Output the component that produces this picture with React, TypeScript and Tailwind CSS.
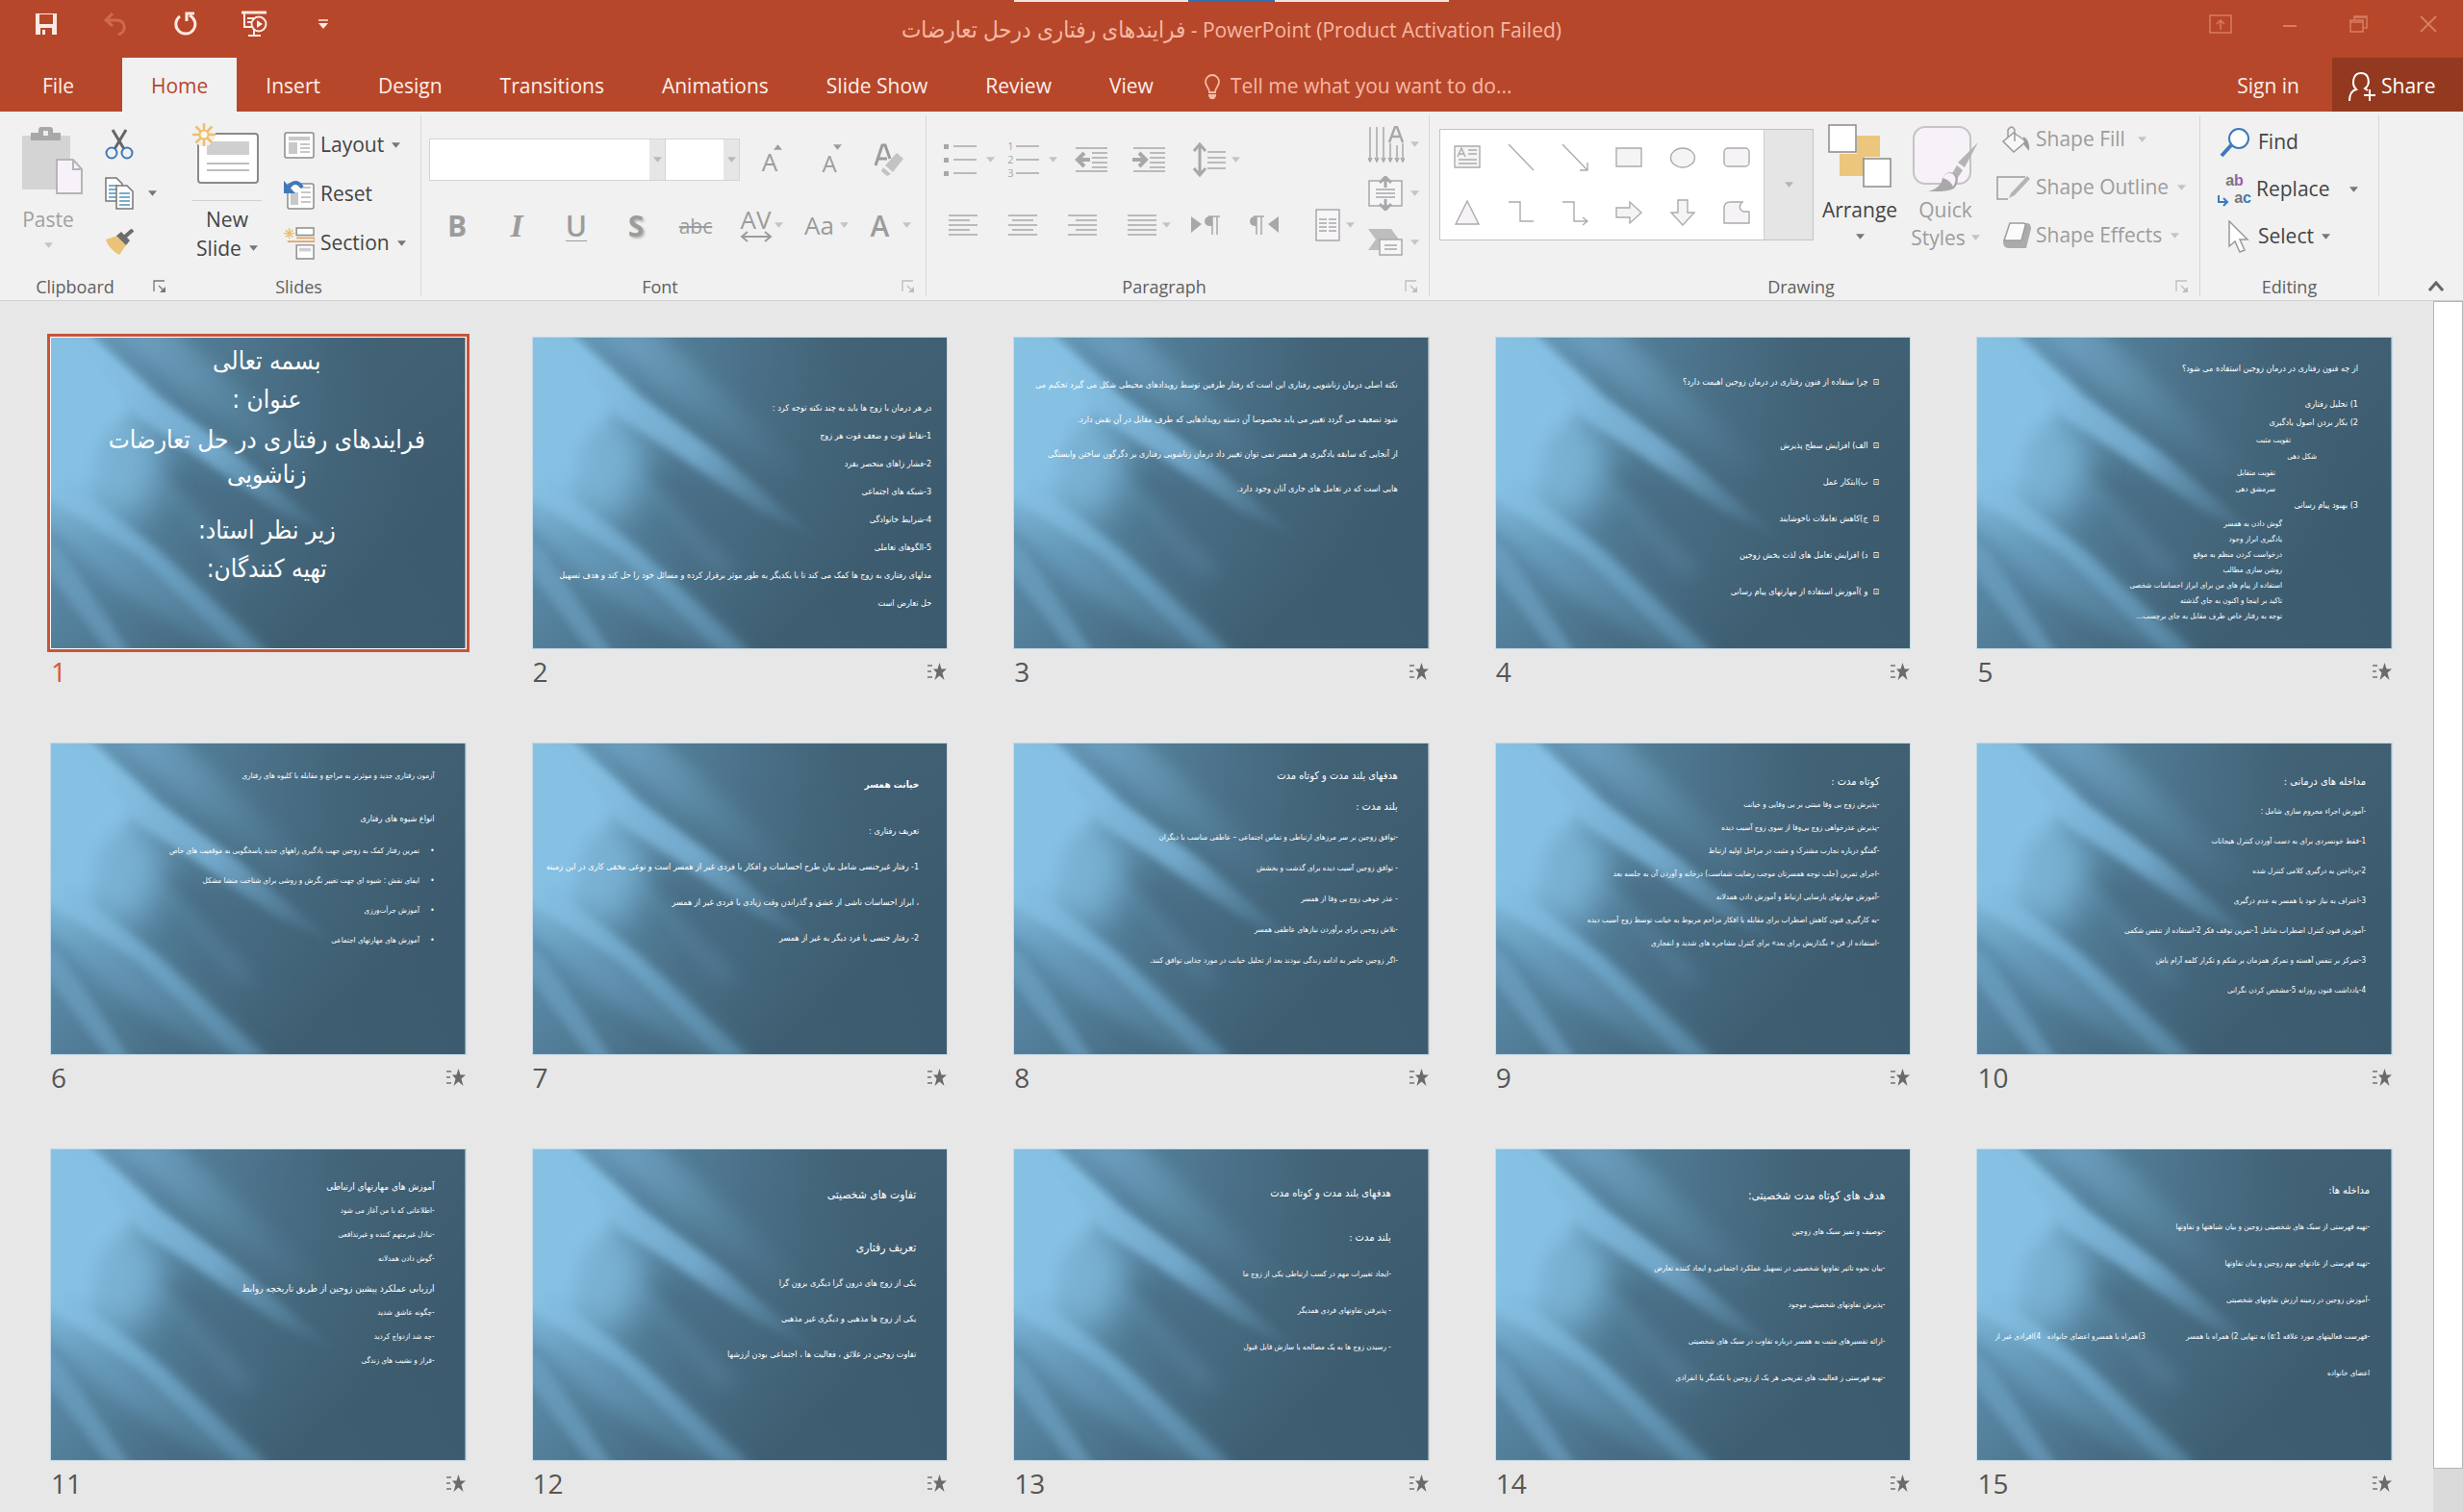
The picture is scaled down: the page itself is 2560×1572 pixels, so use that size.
import type { ReactNode } from "react"
import clsx from "clsx"

type Line = [text: string, className?: string]

type SlideData = {
  body: string
  lines: Line[]
}

const slides: SlideData[] = [
  {
    body: "pt-[4px] pl-[18px] text-center text-[26px] leading-[40px]",
    lines: [
      ["بسمه تعالی"],
      ["عنوان :"],
      ["فرایندهای رفتاری در حل تعارضات", "mt-1 leading-[36px]"],
      ["زناشویی", "leading-[36px]"],
      ["زیر نظر استاد:", "mt-5"],
      ["تهیه کنندگان:"],
    ],
  },
  {
    body: "pt-[59px] pr-[16px] text-[9px] leading-[29px]",
    lines: [
      ["در هر درمان با زوج ها باید به چند نکته توجه کرد :"],
      ["1-نقاط قوت و ضعف قوت هر زوج"],
      ["2-فشار زاهای منحصر بفرد"],
      ["3-شبکه های اجتماعی"],
      ["4-شرایط خانوادگی"],
      ["5-الگوهای تعاملی"],
      ["مدلهای رفتاری به زوج ها کمک می کند تا با یکدیگر به طور موثر برقرار کرده و مسائل خود را حل کند و هدف تسهیل"],
      ["حل تعارض است"],
    ],
  },
  {
    body: "pt-[31px] pr-[32px] text-[9px] leading-[36px]",
    lines: [
      ["نکته اصلی درمان زناشویی رفتاری این است که رفتار طرفین توسط رویدادهای محیطی شکل می گیرد تحکیم می"],
      ["شود تضعیف می گردد تغییر می یابد مخصوصا آن دسته رویدادهایی که طرف مقابل در آن نقش دارد."],
      ["از آنجایی که سابقه یادگیری هر همسر نمی توان تغییر داد درمان زناشویی رفتاری بر دگرگون ساختن وابستگی"],
      ["هایی است که در تعامل های جاری آنان وجود دارد."],
    ],
  },
  {
    body: "pt-[27px] pr-[32px] text-[9px] leading-[38px]",
    lines: [
      ["⊡  چرا ستفاده از فنون رفتاری در درمان زوجین اهیمت دارد؟"],
      ["⊡  الف) افزایش سطح پذیرش", "mt-7"],
      ["⊡  ب)ابتکار عمل"],
      ["⊡  ج)کاهش تعاملات ناخوشایند"],
      ["⊡  د) افزایش تعامل های لذت بخش زوجین"],
      ["⊡  و )آموزش استفاده از مهارتهای پیام رسانی"],
    ],
  },
  {
    body: "pt-[24px] pr-[35px] text-[9px] leading-[16px]",
    lines: [
      ["از چه فنون رفتاری در درمان زوجین استفاده می شود؟"],
      ["1) تحلیل رفتاری", "mt-5 leading-[19px]"],
      ["2) بکار بردن اصول یادگیری", "leading-[19px]"],
      ["تقویت مثبت", "pr-[70px] text-[8px] leading-[17px]"],
      ["شکل دهی", "pr-[43px] text-[8px] leading-[17px]"],
      ["تقویت متقابل", "pr-[86px] text-[8px] leading-[17px]"],
      ["سرمشق دهی", "pr-[86px] text-[8px] leading-[17px]"],
      ["3) بهبود پیام رسانی"],
      ["گوش دادن به همسر", "mt-1 pr-[79px] text-[8px]"],
      ["یادگیری ابراز وجود", "pr-[79px] text-[8px]"],
      ["درخواست کردن منظم به موقع", "pr-[79px] text-[8px]"],
      ["روشن سازی مطالب", "pr-[79px] text-[8px]"],
      ["استفاده از پیام های من برای ابراز احساسات شخصی", "pr-[79px] text-[8px]"],
      ["تاکید بر اینجا و اکنون به جای گذشته", "pr-[79px] text-[8px]"],
      ["توجه به رفتار خاص طرف مقابل به جای برچسب...", "pr-[79px] text-[8px]"],
    ],
  },
  {
    body: "pt-[18px] pr-[32px] text-[8px] leading-[31px]",
    lines: [
      ["آزمون رفتاری جدید و موثرتر به مراجع و مقابله با کلیوه های رفتاری"],
      ["انواع شیوه های رفتاری", "mt-[14px] text-[9px]"],
      ["•     تمرین رفتار کمک به زوجین جهت یادگیری راههای جدید پاسخگویی به موقعیت های خاص", "mt-[2px]"],
      ["•     ایفای نقش : شیوه ای جهت تغییر نگرش و روشی برای شناخت منشا مشکل"],
      ["•     آموزش جرأت‌ورزی"],
      ["•     آموزش های مهارتهای اجتماعی"],
    ],
  },
  {
    body: "pt-[24px] pr-[29px] text-[9px] leading-[37px]",
    lines: [
      ["خیانت همسر", "font-bold text-[10px]"],
      ["تعریف رفتاری :", "mt-3"],
      ["1- رفتار غیرجنسی شامل بیان طرح احساسات و افکار با فردی غیر از همسر است و نوعی مخفی کاری در این زمینه"],
      ["، ابراز احساسات ناشی از عشق و گذراندن وقت زیادی با فردی غیر از همسر"],
      ["2- رفتار جنسی با فرد دیگر به غیر از همسر"],
    ],
  },
  {
    body: "pt-[18px] pr-[32px] text-[8px] leading-[32px]",
    lines: [
      ["هدفهای بلند مدت و کوتاه مدت", "text-[11px]"],
      ["بلند مدت :", "text-[11px]"],
      ["-توافق زوجین بر سر مرزهای ارتباطی و تماس اجتماعی – عاطفی مناسب با دیگران"],
      ["- توافق زوجین آسیب دیده برای گذشت و بخشش"],
      ["- عذر خوهی زوج بی وفا از همسر"],
      ["-تلاش زوجین برای برآوردن نیازهای عاطفی همسر"],
      ["-اگر زوجین حاضر به ادامه زندگی نبودند بعد از تحلیل خیانت در مورد جدایی توافق کنند."],
    ],
  },
  {
    body: "pt-[28px] pr-[32px] text-[8px] leading-[24px]",
    lines: [
      ["کوتاه مدت :", "text-[11px]"],
      ["-پذیرش زوج بی وفا مبتنی بر بی وفایی و خیانت"],
      ["-پذیرش عذرخواهی زوج بی‌وفا از سوی زوج آسیب دیده"],
      ["-گفتگو درباره تجارب مشترک و مثبت در مراحل اولیه ارتباط"],
      ["-اجرای تمرین (جلب توجه همسرتان موجب رضایت شماست) درخانه و آوردن آن به جلسه بعد"],
      ["-آموزش مهارتهای بازسایی ارتباط و آموزش دادن همدلانه"],
      ["-به کارگیری فنون کاهش اضطراب برای مقابله با افکار مزاحم مربوط به خیانت توسط زوج آسیب دیده"],
      ["-استفاده از فن « بگذاریش برای بعد» برای کنترل مشاجره های شدید و انفجاری"],
    ],
  },
  {
    body: "pt-[24px] pr-[27px] text-[8px] leading-[31px]",
    lines: [
      ["مداخله های درمانی :", "text-[11px]"],
      ["-آموزش اجراء محروم سازی شامل :"],
      ["1-فقط خونسردی برای به دست آوردن کنترل هیجانات"],
      ["2-پرداختن به درگیری کلامی کنترل شده"],
      ["3-اعتراف به نیاز خود یا همسر به عدم درگیری"],
      ["-آموزش فنون کنترل اضطراب شامل 1-تمرین توقف فکر 2-استفاده از تنفس شکمی"],
      ["3-تمرکز بر تنفس آهسته و تمرکز همزمان بر شکم و تکرار کلمه آرام باش"],
      ["4-یادداشت فنون روزانه 5-مشخص کردن نگرانی"],
    ],
  },
  {
    body: "pt-[26px] pr-[32px] text-[8px] leading-[25px]",
    lines: [
      ["آموزش های مهارتهای ارتباطی", "text-[10px]"],
      ["-اطلاعاتی که با من آغاز می شود"],
      ["-تبادل غیرمتهم کننده و غیرتدافعی"],
      ["-گوش دادن همدلانه"],
      ["ارزیابی عملکرد پیشین زوجین از طریق تاریخچه روابط", "mt-[6px] text-[10px]"],
      ["-چگونه عاشق شدید"],
      ["-چه شد ازدواج کردید"],
      ["-فراز و نشیب های زندگی"],
    ],
  },
  {
    body: "pt-[29px] pr-[32px] text-[9px] leading-[37px]",
    lines: [
      ["تفاوت های شخصیتی", "text-[12px]"],
      ["تعریف رفتاری", "mt-[18px] text-[12px]"],
      ["یکی از زوج های درون گرا دیگری برون گرا"],
      ["یکی از زوج ها مذهبی و دیگری غیر مذهبی"],
      ["تفاوت زوجین در علائق ، فعالیت ها ، اجتماعی بودن ارزشها"],
    ],
  },
  {
    body: "pt-[27px] pr-[39px] text-[8px] leading-[38px]",
    lines: [
      ["هدفهای بلند مدت و کوتاه مدت", "text-[11px]"],
      ["بلند مدت :", "mt-2 text-[11px]"],
      ["-ایجاد تغییرات مهم در کسب ارتباطی یکی از زوج ما"],
      ["- پذیرفتن تفاوتهای فردی همدیگر"],
      ["- رسیدن زوج ها به یک مصالحه یا سازش قابل قبول"],
    ],
  },
  {
    body: "pt-[29px] pr-[26px] text-[8px] leading-[38px]",
    lines: [
      ["هدف های کوتاه مدت شخصیتی:", "text-[12px]"],
      ["-توصیف و تمیز سبک های زوجین"],
      ["-بیان نحوه تاثیر تفاوتها شخصیتی در تسهیل عملکرد اجتماعی و ایجاد کننده تعارض"],
      ["-پذیرش تفاوتهای شخصیتی موجود"],
      ["-ارائه تفسیرهای مثبت به همسر درباره تفاوت در سبک های شخصیتی"],
      ["-تهیه فهرستی ز فعالیت های تفریحی هر یک از زوجین با یکدیگر یا انفرادی"],
    ],
  },
  {
    body: "pt-[24px] pr-[23px] pl-[18px] text-[8px] leading-[38px]",
    lines: [
      ["مداخله ها:", "text-[11px]"],
      ["-تهیه فهرستی از سبک های شخصیتی زوجین و بیان شباهتها و تفاوتها"],
      ["-تهیه فهرستی از عادتهای مهم زوجین و بیان تفاوتها"],
      ["-آموزش زوجین در زمینه ارزش تفاوتهای شخصیتی"],
      ["-فهرست فعالیتهای مورد علاقه ۵:1) به تنهایی 2) همراه با همسر\t3)همراه با همسرو اعضای خانواده   4)افرادی غیر از", "flex justify-between"],
      ["اعضای خانواده"],
    ],
  },
]

/* Shared artwork behind each slide */

function SlideArt() {
  return (
    <svg width="0" height="0" className="absolute" aria-hidden="true">
      <defs>
        <linearGradient id="base" gradientUnits="userSpaceOnUse" x1="20" y1="200" x2="350" y2="60">
          <stop offset="0" stopColor="#6195b5" />
          <stop offset="0.45" stopColor="#54809b" />
          <stop offset="0.8" stopColor="#4a7087" />
          <stop offset="1" stopColor="#446579" />
        </linearGradient>
        <linearGradient id="shade" gradientUnits="userSpaceOnUse" x1="150" y1="40" x2="330" y2="250">
          <stop offset="0" stopColor="#3c5a6d" stopOpacity="0" />
          <stop offset="1" stopColor="#3c5a6d" stopOpacity="0.9" />
        </linearGradient>
        <linearGradient id="ray" gradientUnits="userSpaceOnUse" x1="40" y1="20" x2="300" y2="215">
          <stop offset="0" stopColor="#86c1e4" />
          <stop offset="0.5" stopColor="#78b0d4" stopOpacity="0.85" />
          <stop offset="1" stopColor="#5b8dab" stopOpacity="0" />
        </linearGradient>
        <linearGradient id="rayFaint" gradientUnits="userSpaceOnUse" x1="100" y1="0" x2="290" y2="150">
          <stop offset="0" stopColor="#7db4d6" stopOpacity="0.55" />
          <stop offset="1" stopColor="#5b8dab" stopOpacity="0" />
        </linearGradient>
        <linearGradient id="rayLow" gradientUnits="userSpaceOnUse" x1="0" y1="150" x2="230" y2="330">
          <stop offset="0" stopColor="#86c1e4" />
          <stop offset="0.5" stopColor="#70a8cb" stopOpacity="0.75" />
          <stop offset="1" stopColor="#5f93b2" stopOpacity="0.5" />
        </linearGradient>
        <filter id="soft" x="-20%" y="-20%" width="140%" height="140%">
          <feGaussianBlur stdDeviation="4" />
        </filter>
        <filter id="medium" x="-30%" y="-30%" width="160%" height="160%">
          <feGaussianBlur stdDeviation="9" />
        </filter>
        <filter id="wide" x="-40%" y="-40%" width="180%" height="180%">
          <feGaussianBlur stdDeviation="18" />
        </filter>
      </defs>
      <symbol id="slide-art" viewBox="0 0 431 323" preserveAspectRatio="none">
        <rect width="431" height="323" fill="url(#base)" />
        <rect width="431" height="323" fill="url(#shade)" />
        <path d="M50 -10 L125 -10 L290 140 L250 140 Z" fill="url(#rayFaint)" filter="url(#medium)" />
        <path d="M-40 -40 L10 -40 L90 70 L120 130 L90 190 L-40 170 Z" fill="#7fb9dc" opacity="0.85" filter="url(#wide)" />
        <path d="M-20 -20 L26 -12 L100 60 L50 110 L40 165 L-20 150 Z" fill="#86c1e4" filter="url(#medium)" />
        <path d="M110 130 L165 150 L260 205 L250 235 L170 215 Z" fill="#44677d" opacity="0.45" filter="url(#medium)" />
        <path d="M20 -12 L32 -8 L108 58 L195 122 L300 212 L235 180 L150 122 L90 84 Z" fill="url(#ray)" filter="url(#soft)" />
        <path d="M60 95 L85 108 L215 245 L190 245 Z" fill="#7db4d6" opacity="0.2" filter="url(#medium)" />
        <path d="M-10 125 L30 160 L112 225 L232 330 L180 330 L70 262 L-10 190 Z" fill="url(#rayLow)" opacity="0.55" filter="url(#medium)" />
        <path d="M-10 128 L32 158 L112 222 L228 330 L198 330 L92 228 L-10 160 Z" fill="url(#rayLow)" filter="url(#soft)" />
        <path d="M-10 205 L12 222 L84 330 L62 330 L-10 235 Z" fill="#74abcd" opacity="0.5" filter="url(#soft)" />
      </symbol>
    </svg>
  )
}

function Caret({ className }: { className?: string }) {
  return (
    <svg viewBox="0 0 10 6" className={clsx("h-[6px] w-[9px] shrink-0", className)} fill="currentColor">
      <path d="M0 0h10L5 6z" />
    </svg>
  )
}

function Icon({ box, className, children }: { box: string; className: string; children: ReactNode }) {
  return (
    <svg viewBox={box} className={clsx("shrink-0", className)} fill="none" stroke="currentColor" strokeWidth="2" aria-hidden="true">
      {children}
    </svg>
  )
}

function Tool({ label, className, children }: { label: string; className?: string; children: ReactNode }) {
  return (
    <button aria-label={label} title={label} className={clsx("flex items-center justify-center gap-[6px]", className)}>
      {children}
    </button>
  )
}

function Group({ label, className, launcher, muted, line = true, children }: {
  label: string
  className: string
  launcher?: boolean
  muted?: boolean
  line?: boolean
  children: ReactNode
}) {
  return (
    <section aria-label={label} className={clsx("flex shrink-0 flex-col", className)}>
      <div className="flex flex-1">
        <div className="flex min-w-0 flex-1 flex-col">
          <div className="flex h-[168px]">{children}</div>
          <div className={clsx("relative flex h-[28px] items-center justify-center text-[18px] text-[#606060]", launcher && "pr-[28px]")}>
            {label}
            {launcher && (
              <button aria-label={label + " settings"} className={clsx("absolute right-[11px]", muted ? "text-[#bdbdbd]" : "text-[#777]")}>
                <Icon box="0 0 14 14" className="size-[14px]">
                  <path d="M1 12V1h11" strokeWidth="1.3" />
                  <path d="M6 6l5 5" strokeWidth="1.3" />
                  <path d="M13 7v6H7z" fill="currentColor" stroke="none" />
                </Icon>
              </button>
            )}
          </div>
        </div>
        {line && <div className="my-1 w-px bg-[#d6d6d6]" />}
      </div>
    </section>
  )
}

/* Title bar */

function TitleBar() {
  return (
    <div className="relative flex h-[60px] items-start justify-between">
      <div className="flex pl-3 text-[#fbe9e3]">
        <Tool label="Save" className="h-[50px] w-[72px]">
          <Icon box="0 0 24 24" className="size-6">
            <path d="M1 1h22v22H1z" fill="currentColor" stroke="none" />
            <path d="M5 2h14v10H5z M6 16h12v7H6z" fill="#b7472a" stroke="none" />
            <path d="M8 18h3v5H8z" fill="currentColor" stroke="none" />
          </Icon>
        </Tool>
        <Tool label="Undo" className="h-[50px] w-[72px] text-[#d06a4f]">
          <Icon box="0 0 24 24" className="size-6">
            <path d="M9 1L2 8l7 6M3 8h10c10 0 11 12 2 15" strokeWidth="3" />
          </Icon>
        </Tool>
        <Tool label="Repeat" className="h-[50px] w-[72px]">
          <Icon box="0 0 26 26" className="size-[26px]">
            <path d="M8 5a10 10 0 1 0 10-1" strokeWidth="3" />
            <path d="M15 10V2h8" strokeWidth="3" />
          </Icon>
        </Tool>
        <Tool label="Start From Beginning" className="h-[50px] w-[72px]">
          <Icon box="0 0 28 28" className="size-7">
            <path d="M1 2h26" strokeWidth="3" />
            <path d="M4 3v14h8M7 8h7M7 12h5M14 20v5M8 26h13" />
            <circle cx="19" cy="14" r="7.500" />
            <path d="M17 10l6 4-6 4z" fill="currentColor" stroke="none" />
          </Icon>
        </Tool>
        <Tool label="Customize Quick Access Toolbar" className="h-[50px] w-[72px]">
          <Icon box="0 0 10 10" className="size-[10px]">
            <path d="M0 1h10" strokeWidth="1.500" />
            <path d="M0 4h10L5 10z" fill="currentColor" stroke="none" />
          </Icon>
        </Tool>
      </div>

      <h1 className="absolute inset-x-0 top-[14px] mx-auto w-fit text-[21px] leading-[32px] text-[#f5b9a5]">
        <bdi className="text-[24px]">فرایندهای رفتاری درحل تعارضات</bdi> - PowerPoint (Product Activation Failed)
      </h1>
      <div className="absolute inset-x-0 top-0 mx-auto flex h-[2px] w-[452px] justify-center bg-[#f4e4df]">
        <div className="w-[90px] bg-[#2f6db5]" />
      </div>

      <div className="flex text-[#d67d64]">
        <Tool label="Ribbon Display Options" className="h-[50px] w-[72px]">
          <Icon box="0 0 24 20" className="h-5 w-6">
            <path d="M1 1h22v18H1zM12 16V6M8 10l4-4 4 4" strokeWidth="1.500" />
          </Icon>
        </Tool>
        <Tool label="Minimize" className="h-[50px] w-[72px]">
          <Icon box="0 0 14 6" className="h-[6px] w-[14px]">
            <path d="M0 5h14" />
          </Icon>
        </Tool>
        <Tool label="Restore Down" className="h-[50px] w-[72px]">
          <Icon box="0 0 20 20" className="size-5">
            <path d="M1 6h13v12H1zM1 8h13M5 5V2h13v12h-4M5 3h13" strokeWidth="1.500" />
          </Icon>
        </Tool>
        <Tool label="Close" className="h-[50px] w-[72px]">
          <Icon box="0 0 18 18" className="size-[18px]">
            <path d="M1 1l16 16M17 1L1 17" />
          </Icon>
        </Tool>
      </div>
    </div>
  )
}

const tabs = ["Home", "Insert", "Design", "Transitions", "Animations", "Slide Show", "Review", "View"]

function Tabs() {
  return (
    <nav className="flex h-[56px] items-stretch text-[21px] text-[#fdeee9]">
      <button className="mr-[6px] w-[121px] pt-[3px]">File</button>
      {tabs.map((tab) => (
        <button key={tab} className={clsx("px-[30px] pt-[3px] whitespace-nowrap", tab === "Home" && "bg-[#f1f1f1] text-[#b7472a]")}>
          {tab}
        </button>
      ))}
      <label className="ml-[22px] flex flex-1 items-center gap-[10px] pt-[3px] text-[#f5b9a5]">
        <Icon box="0 0 18 28" className="h-7 w-[18px]">
          <path d="M6 20c0-5-4-6-4-11a7 7 0 0 1 14 0c0 5-4 6-4 11z" strokeWidth="1.800" />
          <path d="M5 22h8v2l-2 3H7l-2-3z" fill="currentColor" stroke="none" />
        </Icon>
        <input aria-label="Tell me" placeholder="Tell me what you want to do..." className="w-[420px] bg-transparent outline-none placeholder:text-[#f5b9a5]" />
      </label>
      <button className="mr-[34px] pt-[3px]">Sign in</button>
      <button className="flex w-[136px] items-center gap-[6px] bg-[#93391f] pt-[3px] pl-[17px] text-white">
        <Icon box="0 0 28 32" className="h-8 w-7">
          <path d="M1 31c0-7 3-11 7-12-5-5-4-17 5-17s10 12 4 16l3 2M16 25h12M22 19v12" />
        </Icon>
        Share
      </button>
    </nav>
  )
}

/* Ribbon groups */

function Clipboard() {
  return (
    <Group label="Clipboard" className="w-[184px]" launcher line={false}>
      <button className="ml-[6px] flex w-[88px] flex-col items-center pt-4 text-[#a0a0a0]">
        <Icon box="0 0 72 70" className="h-[70px] w-[72px]">
          <path d="M9 9h50v56H9z" fill="#d4d4d4" stroke="none" />
          <path d="M18 6h8V3q0-3 3-3h9q3 0 3 3v3h8v8H18z" fill="#a8a8a8" stroke="none" />
          <path d="M31 4h5v5h-5z" fill="#eee" stroke="none" />
          <path d="M45 34h17l9 10v25H45z" fill="#f7f2f9" stroke="#b5b5b5" />
          <path d="M62 34v10h9" stroke="#b5b5b5" />
        </Icon>
        <span className="mt-3 leading-[28px]">Paste</span>
        <Caret className="mt-[10px] text-[#c4c4c4]" />
      </button>
      <div className="flex flex-col pt-2 pl-[14px]">
        <Tool label="Cut" className="h-[51px] w-[32px]">
          <Icon box="0 0 30 32" className="h-8 w-[30px]">
            <path d="M8 1l12 20M22 1L10 21" stroke="#666" strokeWidth="3" />
            <circle cx="7" cy="25" r="5.500" stroke="#3d7ab8" />
            <circle cx="23" cy="25" r="5.500" stroke="#3d7ab8" />
          </Icon>
        </Tool>
        <div className="flex">
          <Tool label="Copy" className="h-[51px] w-[32px]">
            <Icon box="0 0 30 34" className="h-[34px] w-[30px]">
              <path d="M1 1h11l6 6v18H1z" fill="#fff" stroke="#777" strokeWidth="1.500" />
              <path d="M4 9h9M4 13h9M4 17h9M4 21h9" stroke="#4f93b8" strokeWidth="1.500" />
              <path d="M12 9h11l6 6v18H12z" fill="#fff" stroke="#777" strokeWidth="1.500" />
              <path d="M15 17h11M15 21h11M15 25h11M15 29h11" stroke="#4f93b8" strokeWidth="1.500" />
            </Icon>
          </Tool>
          <Tool label="Copy options" className="w-[36px] text-[#777]">
            <Caret />
          </Tool>
        </div>
        <Tool label="Format Painter" className="h-[51px] w-[32px]">
          <Icon box="0 0 32 28" className="h-7 w-8">
            <path d="M2 11l12-4 9 10-7 10C9 23 4 18 2 11z" fill="#e9c478" stroke="none" />
            <path d="M13 7l5-4 9 9-4 5z" fill="#6d6d6d" stroke="none" />
            <path d="M22 8l8-7" stroke="#6d6d6d" strokeWidth="4" />
          </Icon>
        </Tool>
      </div>
    </Group>
  )
}

function Spark() {
  return <path d="M12 0v24M0 12h24M3.500 3.500l17 17M20.500 3.500l-17 17" stroke="#eebf6e" strokeWidth="2.500" />
}

function Slides() {
  return (
    <Group label="Slides" className="w-[254px]">
      <button className="ml-4 flex w-[72px] flex-col items-center pt-3 text-[#444]">
        <Icon box="0 0 72 64" className="h-16 w-[72px]">
          <rect x="6" y="11" width="62" height="51" rx="3" fill="#fff" stroke="#8a8a8a" />
          <path d="M15 19h44v14H15z" fill="#cfcfcf" stroke="none" />
          <path d="M15 42h44M15 49h44" stroke="#a9a9a9" strokeWidth="1.500" />
          <circle cx="12" cy="12" r="12" fill="#f1f1f1" stroke="none" />
          <Spark />
          <circle cx="12" cy="12" r="4.500" fill="#fff8e8" stroke="#eebf6e" />
        </Icon>
        <span className="mt-4 h-px w-full bg-[#d0d0d0]" />
        <span className="mt-1 leading-[30px]">New</span>
        <span className="flex items-center gap-2 leading-[30px]">Slide <Caret className="text-[#777]" /></span>
      </button>
      <div className="ml-[23px] flex flex-col pt-[9px] text-[#444]">
        <button className="flex h-[51px] items-center gap-[6px]">
          <Icon box="0 0 32 28" className="h-7 w-8">
            <rect x="1" y="1" width="30" height="26" rx="2" fill="#fff" stroke="#8a8a8a" strokeWidth="1.500" />
            <path d="M5 5h22v4H5zM5 11h9v12H5z" fill="#c9c9c9" stroke="none" />
            <path d="M17 13h10M17 17h10M17 21h10" stroke="#b5b5b5" strokeWidth="1.500" />
          </Icon>
          Layout <Caret className="ml-[2px] text-[#777]" />
        </button>
        <button className="flex h-[51px] items-center gap-[6px]">
          <Icon box="0 0 32 32" className="size-8">
            <rect x="4" y="5" width="27" height="26" rx="2" fill="#fff" stroke="#8a8a8a" strokeWidth="1.500" />
            <path d="M7 14h8v13H7z" fill="#c9c9c9" stroke="none" />
            <path d="M18 9h10M18 14h10M18 19h10M18 24h10" stroke="#b5b5b5" strokeWidth="1.500" />
            <path d="M19 9C14 1 7 3 4 12" stroke="#3d7ab8" strokeWidth="4" />
            <path d="M0 2v13h12z" fill="#3d7ab8" stroke="none" />
          </Icon>
          Reset
        </button>
        <button className="flex h-[51px] items-center gap-[6px]">
          <Icon box="0 0 34 36" className="h-9 w-8">
            <path d="M14 1h19v8H14zM14 20h19v15H14z" fill="#fff" stroke="#8a8a8a" strokeWidth="1.500" />
            <path d="M17 23h13v4H17z" fill="#cfcfcf" stroke="none" />
            <path d="M4 16h30v-4H14" stroke="#e0a56a" />
            <path d="M6 1v12M0 7h12M2 3l8 8M10 3l-8 8" stroke="#eebf6e" strokeWidth="1.500" />
          </Icon>
          Section <Caret className="ml-[2px] text-[#777]" />
        </button>
      </div>
    </Group>
  )
}

function FontGroup() {
  return (
    <Group label="Font" className="w-[525px] text-[#9c9c9c]" launcher muted>
      <div className="flex flex-col pt-7">
        <div className="flex h-[44px] pl-2">
          <input aria-label="Font" className="w-[229px] border border-r-0 border-[#d4d4d4] bg-white px-2 text-[20px] outline-none" />
          <Tool label="Font list" className="w-[17px] border border-l-0 border-[#d4d4d4] bg-[#e6e6e6] text-[#b9b9b9]">
            <Caret className="w-2" />
          </Tool>
          <input aria-label="Font size" className="w-[60px] border-y border-[#d4d4d4] bg-white px-2 text-[20px] outline-none" />
          <Tool label="Size list" className="w-[17px] border border-l-0 border-[#d4d4d4] bg-[#e6e6e6] text-[#b9b9b9]">
            <Caret className="w-2" />
          </Tool>
          <Tool label="Increase Font Size" className="relative w-[62px] pt-1 text-[26px]">
            A
            <Caret className="absolute top-[6px] right-[18px] rotate-180" />
          </Tool>
          <Tool label="Decrease Font Size" className="relative w-[62px] pt-2 text-[24px]">
            A
            <Caret className="absolute top-[6px] right-[18px]" />
          </Tool>
          <Tool label="Clear Formatting" className="w-[62px]">
            <Icon box="0 0 32 36" className="h-9 w-8">
              <path d="M2 24L9 3h3l5 14M5 17h9" strokeWidth="3" />
              <path d="M24 11l7 6-11 14-8-7z" fill="#c3c3c3" stroke="none" />
              <path d="M10 26l8 7-4 2-6-5z" fill="#c3c3c3" stroke="none" />
            </Icon>
          </Tool>
        </div>
        <div className="mt-6 flex h-[44px] pl-[6px] text-[30px]">
          <Tool label="Bold" className="w-[62px] font-bold">B</Tool>
          <Tool label="Italic" className="w-[62px] font-['Liberation_Serif',serif] text-[34px] font-bold italic">I</Tool>
          <Tool label="Underline" className="w-[62px] font-semibold underline decoration-1 underline-offset-4">U</Tool>
          <Tool label="Text Shadow" className="w-[62px] font-bold text-shadow-[2px_2px_2px_#bbb]">S</Tool>
          <Tool label="Strikethrough" className="w-[62px] pt-1 text-[21px] line-through">abc</Tool>
          <Tool label="Character Spacing" className="w-[74px]">
            <span className="flex flex-col items-center text-[26px] leading-[24px]">
              AV
              <Icon box="0 0 34 12" className="h-3 w-[34px]">
                <path d="M2 6h30M8 1L2 6l6 5M26 1l6 5-6 5" />
              </Icon>
            </span>
            <Caret className="-ml-1 text-[#c4c4c4]" />
          </Tool>
          <Tool label="Change Case" className="w-[62px] text-[26px]">
            Aa <Caret className="text-[#c4c4c4]" />
          </Tool>
          <Tool label="Font Color" className="w-[72px] font-semibold">
            A <Caret className="ml-2 text-[#c4c4c4]" />
          </Tool>
        </div>
      </div>
    </Group>
  )
}

const aligns: [string, string][] = [
  ["Align Left", "M0 1h30M0 6h22M0 11h30M0 16h22M0 21h30"],
  ["Center", "M0 1h30M4 6h22M0 11h30M4 16h22M0 21h30"],
  ["Align Right", "M0 1h30M8 6h22M0 11h30M8 16h22M0 21h30"],
]

function Paragraph() {
  return (
    <Group label="Paragraph" className="w-[523px] text-[#a8a8a8]" launcher muted>
      <div className="flex w-[459px] flex-col pt-7">
        <div className="flex h-[44px] pl-[11px]">
          <Tool label="Bullets" className="w-[66px]">
            <Icon box="0 0 34 36" className="h-9 w-[34px]">
              <path d="M10 4h24M10 18h24M10 32h24" strokeWidth="1.500" />
              <path d="M0 2h5v5H0zM0 16h5v5H0zM0 30h5v5H0z" fill="currentColor" stroke="none" />
            </Icon>
            <Caret className="ml-1 text-[#c4c4c4]" />
          </Tool>
          <Tool label="Numbering" className="w-[66px]">
            <span className="flex flex-col text-[11px] leading-[14px]">
              <span>1</span>
              <span>2</span>
              <span>3</span>
            </span>
            <Icon box="0 0 24 36" className="-ml-1 h-9 w-6">
              <path d="M0 4h24M0 18h24M0 32h24" strokeWidth="1.500" />
            </Icon>
            <Caret className="ml-1 text-[#c4c4c4]" />
          </Tool>
          <Tool label="Decrease List Level" className="w-[56px]">
            <Icon box="0 0 34 26" className="h-[26px] w-[34px]">
              <path d="M1 1h33M18 6h16M18 11h16M18 16h16M18 21h16M1 25h33" strokeWidth="1.500" />
              <path d="M16 13H4M10 6l-7 7 7 7" strokeWidth="4" />
            </Icon>
          </Tool>
          <Tool label="Increase List Level" className="w-[64px]">
            <Icon box="0 0 34 26" className="h-[26px] w-[34px]">
              <path d="M1 1h33M18 6h16M18 11h16M18 16h16M18 21h16M1 25h33" strokeWidth="1.500" />
              <path d="M0 13h12M7 6l7 7-7 7" strokeWidth="4" />
            </Icon>
          </Tool>
          <Tool label="Line Spacing" className="w-[76px]">
            <Icon box="0 0 34 36" className="h-9 w-[34px]">
              <path d="M15 10h19M15 16h19M15 21h19M15 27h19" strokeWidth="1.500" />
              <path d="M7 3v30M1 9l6-7 6 7M1 27l6 7 6-7" strokeWidth="3" />
            </Icon>
            <Caret className="text-[#c4c4c4]" />
          </Tool>
        </div>
        <div className="mt-6 flex h-[44px] pl-[7px]">
          {aligns.map(([label, d]) => (
            <Tool key={label} label={label} className="w-[62px]">
              <Icon box="0 0 30 22" className="h-[22px] w-[30px]">
                <path d={d} strokeWidth="1.500" />
              </Icon>
            </Tool>
          ))}
          <Tool label="Justify" className="w-[76px]">
            <Icon box="0 0 30 22" className="h-[22px] w-[30px]">
              <path d="M0 1h30M0 6h30M0 11h30M0 16h30M0 21h30" strokeWidth="1.500" />
            </Icon>
            <Caret className="text-[#c4c4c4]" />
          </Tool>
          <Tool label="Left-to-Right" className="w-[42px]">
            <Icon box="0 0 30 20" className="h-5 w-[30px]">
              <path d="M0 1l11 8-11 9z" fill="currentColor" stroke="none" />
              <path d="M22 1v19M27 1v19M18 1h12" strokeWidth="1.500" />
              <path d="M22 1h-3a5 5 0 0 0 0 10h3z" fill="currentColor" stroke="none" />
            </Icon>
          </Tool>
          <Tool label="Right-to-Left" className="w-[80px]">
            <Icon box="0 0 30 20" className="h-5 w-[30px]">
              <path d="M30 1l-11 8 11 9z" fill="currentColor" stroke="none" />
              <path d="M7 1v19M12 1v19M4 1h11" strokeWidth="1.500" />
              <path d="M7 1H5a5 5 0 0 0 0 10h2z" fill="currentColor" stroke="none" />
            </Icon>
          </Tool>
          <Tool label="Columns" className="w-[66px]">
            <Icon box="0 0 26 34" className="h-[34px] w-[26px]">
              <path d="M1 1h24v32H1z" fill="#f8f5f9" strokeWidth="1.500" />
              <path d="M4 11h8M4 15h8M4 19h8M4 23h8M14 11h8M14 15h8M14 19h8M14 23h8" strokeWidth="1.500" />
            </Icon>
            <Caret className="text-[#c4c4c4]" />
          </Tool>
        </div>
      </div>
      <div className="flex flex-col pt-2">
        <Tool label="Text Direction" className="h-[51px]">
          <Icon box="0 0 38 38" className="size-[38px]">
            <path d="M2 1v35M9 1v35M16 1v35M23 18v18M30 20v16M36 18v18" strokeWidth="1.500" />
            <path d="M0 33l2 4 2-4M7 33l2 4 2-4M14 33l2 4 2-4M21 33l2 4 2-4M28 33l2 4 2-4M34 33l2 4 2-4" strokeWidth="1.500" />
            <path d="M22 17l6-16h2l6 16M24 11h10" strokeWidth="2.500" />
          </Icon>
          <Caret className="text-[#c4c4c4]" />
        </Tool>
        <Tool label="Align Text" className="h-[51px]">
          <Icon box="0 0 38 36" className="h-9 w-[38px]">
            <path d="M1 5h34v26H1z" fill="#f8f5f9" strokeWidth="1.500" />
            <path d="M8 14h20M8 18h20M8 22h20" strokeWidth="1.500" />
            <path d="M18 12V2M12 7l6-6 6 6M18 24v10M12 29l6 6 6-6" strokeWidth="3" />
          </Icon>
          <Caret className="text-[#c4c4c4]" />
        </Tool>
        <Tool label="Convert to SmartArt" className="h-[51px]">
          <Icon box="0 0 38 28" className="h-7 w-[38px]">
            <path d="M0 0h24l8 11H12v11H0l8-11z" fill="#bdbdbd" stroke="none" />
            <path d="M12 11h23v16H12z" fill="#f8f5f9" strokeWidth="1.500" />
            <path d="M17 17h13M17 21h13" strokeWidth="1.500" />
          </Icon>
          <Caret className="text-[#c4c4c4]" />
        </Tool>
      </div>
    </Group>
  )
}

const shapes: [string, ReactNode][] = [
  ["Text Box", <><path d="M1 2h26v22H1z" fill="#f6f3f7" /><path d="M4 13l4-9 4 9M5 10h6M15 6h9M15 10h9M5 16h19M5 20h19" /></>],
  ["Line", <path d="M1 0l26 27" />],
  ["Arrow", <path d="M1 0l26 27M27 19v8h-8" />],
  ["Rectangle", <path d="M1 4h26v19H1z" fill="#f6f3f7" />],
  ["Oval", <ellipse cx="14" cy="14" rx="12.500" ry="10" fill="#f6f3f7" />],
  ["Rounded Rectangle", <rect x="1" y="4" width="26" height="19" rx="4" fill="#f6f3f7" />],
  ["Triangle", <path d="M14 2l12 24H2z" fill="#f6f3f7" />],
  ["Elbow", <path d="M1 3h12v20h14" />],
  ["Elbow Arrow", <path d="M1 3h12v20h14M22 19l5 4-5 4" />],
  ["Right Arrow", <path d="M1 9h14V3l12 11-12 11v-6H1z" fill="#f6f3f7" />],
  ["Down Arrow", <path d="M9 1h10v13h7L14 27 2 14h7z" fill="#f6f3f7" />],
  ["Freeform", <path d="M1 25V9q0-6 7-6h12q-6 6 1 10h6v12z" fill="#f6f3f7" />],
]

function Drawing() {
  return (
    <Group label="Drawing" className="w-[801px] text-[#9c9c9c]" launcher muted>
      <div className="mt-[18px] ml-[10px] flex h-[116px] w-[389px] border border-[#c3c3c3] bg-white">
        <div className="grid flex-1 grid-cols-6 text-[#acacac]">
          {shapes.map(([label, drawing]) => (
            <Tool key={label} label={label}>
              <svg viewBox="0 0 28 28" className="size-7" fill="none" stroke="currentColor" strokeWidth="1.400">
                {drawing}
              </svg>
            </Tool>
          ))}
        </div>
        <Tool label="More shapes" className="w-[51px] border-l border-[#d0d0d0] bg-[#e5e5e5] text-[#b4b4b4]">
          <Caret className="h-2 w-3" />
        </Tool>
      </div>
      <button className="ml-2 flex w-[80px] flex-col items-center pt-[13px] text-[#444]">
        <Icon box="0 0 66 66" className="size-[66px]">
          <path d="M30 12h24v22H38v20H12V31h18z" fill="#ebc67c" stroke="none" />
          <path d="M1 1h28v28H1zM37 36h28v29H37z" fill="#fff" stroke="#8a8a8a" strokeWidth="1.500" />
        </Icon>
        <span className="mt-2 leading-[30px]">Arrange</span>
        <Caret className="mt-[10px] text-[#777]" />
      </button>
      <button className="flex w-[98px] flex-col items-center pt-[15px]">
        <Icon box="0 0 68 68" className="size-[68px]">
          <rect x="1" y="1" width="59" height="59" rx="12" fill="#f6f2f8" stroke="#c4c4c4" />
          <path d="M68 17L54 43l-7-5zM52 46l-6-5-6 10 6 4z" fill="#b4b4b4" stroke="none" />
          <path d="M16 68q14-4 15-14 4-8 12-5 8 6 0 16-8 4-27 3z" fill="#a9a9a9" stroke="none" />
          <path d="M31 54q4-7 11-4 5 5 0 13-3-7-11-9z" fill="#f6f2f8" stroke="none" />
        </Icon>
        <span className="mt-[4px] leading-[30px]">Quick</span>
        <span className="flex items-center gap-[6px] leading-[28px]">Styles <Caret className="text-[#c4c4c4]" /></span>
      </button>
      <div className="flex flex-col pt-1 pl-1 whitespace-nowrap">
        <button className="flex h-[50px] items-center gap-[5px]">
          <Icon box="0 0 36 28" className="h-7 w-9">
            <path d="M18 7l13 9-13 11L7 16z" fill="#f8f8f8" strokeWidth="1.500" />
            <path d="M12 12V4q4-6 7 0v12" strokeWidth="1.500" />
            <path d="M28 11q7 3 6 15l-5-6z" fill="currentColor" stroke="none" />
          </Icon>
          Shape Fill <Caret className="ml-2 text-[#c4c4c4]" />
        </button>
        <button className="flex h-[50px] items-center gap-[5px]">
          <Icon box="0 0 36 26" className="h-[26px] w-9">
            <path d="M30 2H1v23h11" strokeWidth="1.500" />
            <path d="M15 19L32 1l3 3-16 17-6 3z" fill="#b4b4b4" stroke="none" />
          </Icon>
          Shape Outline <Caret className="ml-1 text-[#c4c4c4]" />
        </button>
        <button className="flex h-[50px] items-center gap-[5px]">
          <Icon box="0 0 36 30" className="h-[30px] w-9">
            <path d="M15 2h17q4 0 4 6l-5 20H13q-6 0-6-7z" fill="#ababab" stroke="none" />
            <path d="M14 2h14q3 0 2 3l-4 15H8z" fill="#fbfbfb" strokeWidth="1.500" />
          </Icon>
          Shape Effects <Caret className="ml-1 text-[#c4c4c4]" />
        </button>
      </div>
    </Group>
  )
}

function Editing() {
  return (
    <Group label="Editing" className="w-[186px] text-[#444]">
      <div className="flex flex-col pt-[7px] pl-[18px]">
        <button className="flex h-[49px] items-center gap-2">
          <Icon box="0 0 34 32" className="h-8 w-[34px]">
            <circle cx="22" cy="12" r="10" fill="#fdfdfd" stroke="#3d7ab8" />
            <path d="M14 19L4 30" stroke="#3d7ab8" strokeWidth="4" />
          </Icon>
          Find
        </button>
        <button className="flex h-[49px] items-center gap-[5px]">
          <span className="relative flex w-[35px] flex-col font-['Liberation_Sans',sans-serif] text-[16px] leading-[18px] font-bold text-[#777]">
            <span>a<span className="text-[#9560ad]">b</span></span>
            <span className="text-right">a<span className="text-[#3d7ab8]">c</span></span>
            <Icon box="0 0 12 12" className="absolute bottom-0 left-0 size-3 text-[#3d7ab8]">
              <path d="M1 0v7h9M6 3l4 4-4 4" />
            </Icon>
          </span>
          Replace <Caret className="ml-4 text-[#777]" />
        </button>
        <button className="flex h-[49px] items-center gap-2">
          <Icon box="0 0 34 34" className="size-[34px]">
            <path d="M12 1v26l6-5 5 11 5-2-5-11h8z" fill="#fff" stroke="#999" strokeWidth="1.500" />
          </Icon>
          Select <Caret className="text-[#777]" />
        </button>
      </div>
    </Group>
  )
}

function Star() {
  return (
    <svg viewBox="0 0 20 18" className="h-[18px] w-5" fill="#6a6a6a" aria-label="Has transition">
      <path d="M12.500 0l2 6.500H20l-4.500 4L17.500 18l-5-4.500-5 4.500 2-7.500L6 6.500h4.500z" />
      <path d="M0 2h5v2H0zM0 8h4v2H0zM0 14h5v2H0z" opacity="0.700" />
    </svg>
  )
}

function Slide({ slide, number }: { slide: SlideData; number: number }) {
  const selected = number === 1
  return (
    <li>
      <div
        className={clsx(
          "relative aspect-4/3 overflow-hidden ring-1",
          selected ? "ring-white outline-[3px] outline-offset-1 outline-[#c7543a]" : "ring-[#c5d9e4]",
        )}
      >
        <svg className="absolute inset-0 size-full" aria-hidden="true">
          <use href="#slide-art" width="100%" height="100%" />
        </svg>
        <div dir="rtl" className={clsx("relative font-['DejaVu_Sans_Condensed','DejaVu_Sans',sans-serif] whitespace-pre text-white", slide.body)}>
          {slide.lines.map(([text, className]) => (
            <p key={text} className={className}>
              {text.includes("\t") ? text.split("\t").map((part) => <span key={part}>{part}</span>) : text}
            </p>
          ))}
        </div>
      </div>
      <div className="flex h-[48px] items-center justify-between">
        <span className={clsx("text-[28px]", selected ? "text-[#d2573b]" : "text-[#555]")}>{number}</span>
        {!selected && <Star />}
      </div>
    </li>
  )
}

export default function App() {
  return (
    <div className="flex h-screen flex-col overflow-hidden bg-[#e7e7e7] font-['Open_Sans','DejaVu_Sans_Condensed',sans-serif]">
      <header className="bg-[#b7472a]">
        <TitleBar />
        <Tabs />
      </header>

      <div className="flex shrink-0 border-b border-[#d0d0d0] bg-[#f1f1f1] text-[21px]">
        <Clipboard />
        <Slides />
        <FontGroup />
        <Paragraph />
        <Drawing />
        <Editing />
        <div className="flex flex-1 items-end justify-end pr-5 pb-2">
          <button aria-label="Collapse the Ribbon" className="text-[#666]">
            <Icon box="0 0 16 12" className="h-3 w-4">
              <path d="M1 10l7-8 7 8" strokeWidth="3" />
            </Icon>
          </button>
        </div>
      </div>

      <main className="flex min-h-0 flex-1">
        <SlideArt />
        <ol className="grid flex-1 grid-cols-5 content-start gap-x-[70px] gap-y-[51px] pt-[38px] pr-[43px] pl-[53px]">
          {slides.map((slide, i) => (
            <Slide key={i} slide={slide} number={i + 1} />
          ))}
        </ol>
        <div className="flex w-[31px] flex-col bg-[#dadada] pb-[45px]">
          <div className="flex-1 border border-[#b5b5b5] bg-white" />
        </div>
      </main>
    </div>
  )
}
